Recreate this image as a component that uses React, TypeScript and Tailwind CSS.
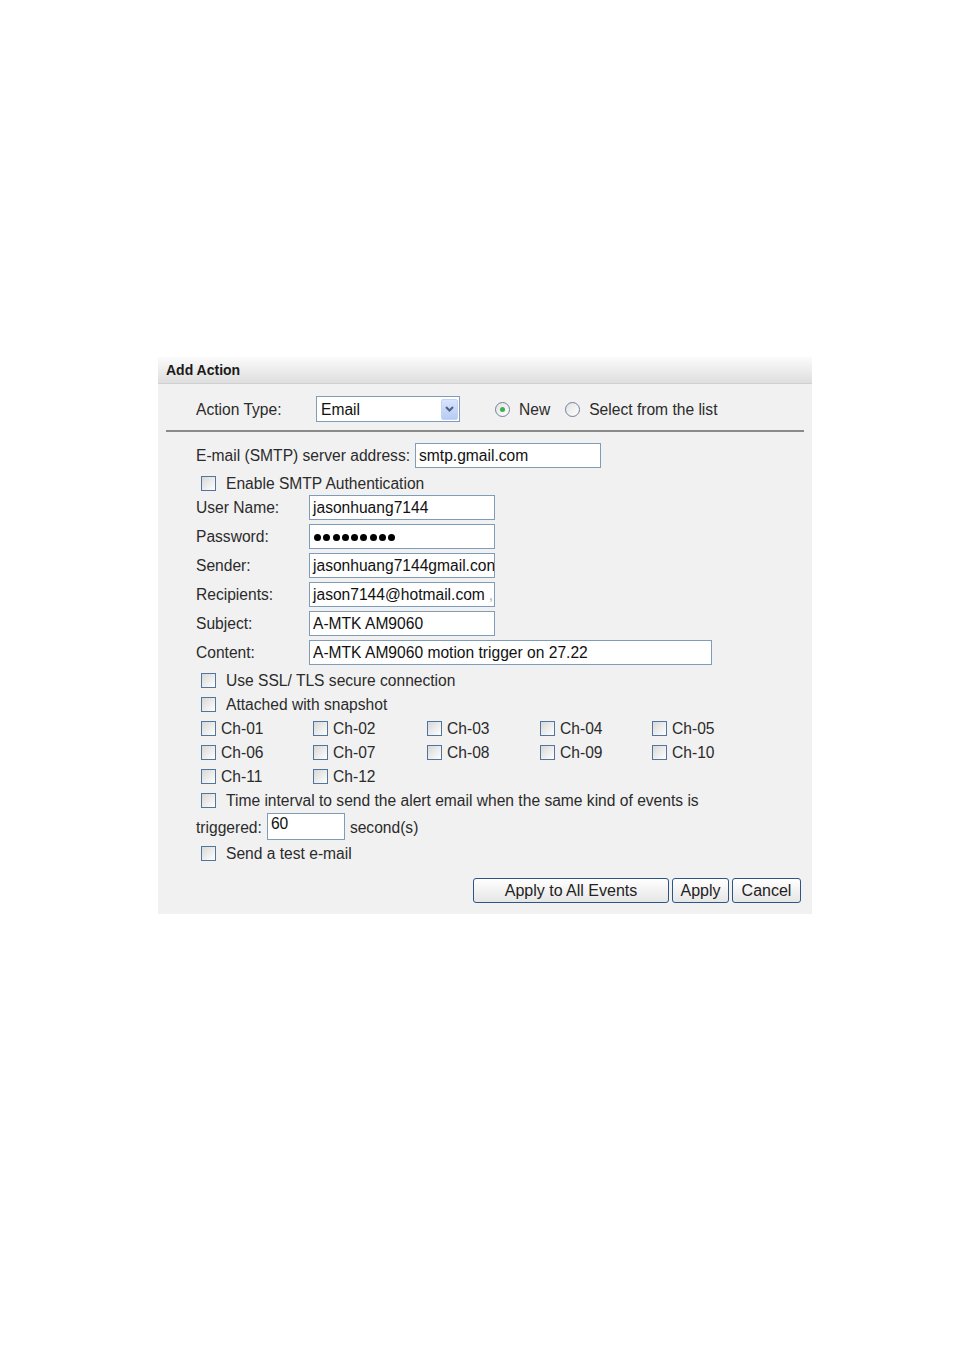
import React from "react";

const font = { fontFamily: '"Liberation Sans", Arial, sans-serif' };

function Check({ className = "" }: { className?: string }) {
  return (
    <span
      className={`block w-[15px] h-[15px] shrink-0 border border-[#52759b] bg-gradient-to-br from-[#d8d8d8] to-[#ffffff] ${className}`}
    />
  );
}

function Radio({ checked }: { checked?: boolean }) {
  return (
    <span className="flex items-center justify-center w-[15px] h-[15px] shrink-0 rounded-full border border-[#6f829a] bg-gradient-to-br from-[#e2e2e2] to-[#ffffff]">
      {checked && <span className="block w-[5px] h-[5px] rounded-full bg-[#3bb34a]" />}
    </span>
  );
}

function Input({ w, children, h = "h-[25px]" }: { w: string; children?: React.ReactNode; h?: string }) {
  return (
    <div className={`${w} ${h} border border-[#7f9db9] bg-white flex items-center pl-[3px] pt-[1px] overflow-hidden whitespace-nowrap text-[15.6px] text-[#111]`}>
      {children}
    </div>
  );
}

function Btn({ w, children }: { w: string; children: React.ReactNode }) {
  return (
    <div className={`${w} h-[25px] rounded-[3px] border border-[#2e5584] bg-gradient-to-b from-[#ffffff] to-[#e6e6e6] flex items-center justify-center text-[16px] text-[#222]`}>
      {children}
    </div>
  );
}

function FieldRow({ label, children, mt = "mt-[4px]" }: { label: string; children: React.ReactNode; mt?: string }) {
  return (
    <div className={`flex items-center h-[25px] ${mt}`}>
      <div className="w-[113px] shrink-0 pt-[1px]">{label}</div>
      {children}
    </div>
  );
}

function CheckRow({ label }: { label: string }) {
  return (
    <div className="flex items-center h-[24px] pl-[5px]">
      <Check />
      <span className="ml-[10px] pt-[1px]">{label}</span>
    </div>
  );
}

export default function App() {
  const chs = ["Ch-01", "Ch-02", "Ch-03", "Ch-04", "Ch-05", "Ch-06", "Ch-07", "Ch-08", "Ch-09", "Ch-10", "Ch-11", "Ch-12"];
  return (
    <div className="w-[955px] h-[1350px] bg-white pt-[357px] pl-[158px]" style={font}>
      <div className="w-[654px] bg-[#f1f1f1] text-[15.6px] text-[#2b2b2b]">
        <div className="h-[27px] bg-gradient-to-b from-[#fbfbfb] to-[#dedede] flex items-center pl-[8px] border-b border-[#d0d0d0]">
          <span className="text-[14px] font-bold text-[#1a1a1a]">Add Action</span>
        </div>
        <div className="pt-[12px] pb-[11px]">
          <div className="flex items-center h-[26px] pl-[38px]">
            <div className="w-[120px] pt-[2px]">Action Type:</div>
            <div className="w-[144px] h-[26px] border border-[#7f9db9] bg-white flex items-center justify-between pl-[4px] pr-[1px]">
              <span className="text-[#111] pt-[1px]">Email</span>
              <span className="w-[17px] h-[21px] rounded-[2px] bg-gradient-to-b from-[#d8e4fc] to-[#b7cbf5] border border-[#c3d3f5] flex items-center justify-center">
                <svg width="9" height="6" viewBox="0 0 9 6">
                  <path d="M1 1 L4.5 4.5 L8 1" stroke="#4d6185" strokeWidth="2" fill="none" />
                </svg>
              </span>
            </div>
            <div className="ml-[35px] flex items-center pt-[2px]">
              <Radio checked />
              <span className="ml-[9px]">New</span>
              <span className="ml-[15px] flex items-center"><Radio /></span>
              <span className="ml-[9px]">Select from the list</span>
            </div>
          </div>
          <div className="mx-[8px] mt-[8px] h-[2px] bg-[#8a8a8a]" />
          <div className="pl-[38px]">
            <div className="flex items-center h-[26px] mt-[10px]">
              <span className="pt-[2px]">E-mail (SMTP) server address:</span>
              <div className="ml-[5px]">
                <Input w="w-[186px]">smtp.gmail.com</Input>
              </div>
            </div>
            <div className="mt-[3px]">
              <CheckRow label="Enable SMTP Authentication" />
            </div>
            <FieldRow label="User Name:" mt="mt-0">
              <Input w="w-[186px]">jasonhuang7144</Input>
            </FieldRow>
            <FieldRow label="Password:">
              <Input w="w-[186px]">
                <div className="flex gap-[2.3px] ml-[1px]">
                  {Array.from({ length: 9 }).map((_, i) => (
                    <span key={i} className="block w-[7px] h-[7px] rounded-full bg-black" />
                  ))}
                </div>
              </Input>
            </FieldRow>
            <FieldRow label="Sender:">
              <Input w="w-[186px]">jasonhuang7144gmail.con</Input>
            </FieldRow>
            <FieldRow label="Recipients:">
              <Input w="w-[186px]">
                jason7144@hotmail.com<span className="text-[#b0b0b0] ml-[4px]">,</span>
              </Input>
            </FieldRow>
            <FieldRow label="Subject:">
              <Input w="w-[186px]">A-MTK AM9060</Input>
            </FieldRow>
            <FieldRow label="Content:">
              <Input w="w-[403px]">A-MTK AM9060 motion trigger on 27.22</Input>
            </FieldRow>
            <div className="mt-[3px]">
              <CheckRow label="Use SSL/ TLS secure connection" />
              <CheckRow label="Attached with snapshot" />
            </div>
            <div className="grid grid-cols-[112px_114px_113px_112px_80px] pl-[5px]">
              {chs.map((c) => (
                <div key={c} className="flex items-center h-[24px]">
                  <Check />
                  <span className="ml-[5px] pt-[1px]">{c}</span>
                </div>
              ))}
            </div>
            <CheckRow label="Time interval to send the alert email when the same kind of events is" />
            <div className="flex items-center h-[28px]">
              <span className="pt-[3px]">triggered:</span>
              <div className="ml-[5px]">
                <Input w="w-[78px]" h="h-[27px]">
                  <span className="-mt-[5px]">60</span>
                </Input>
              </div>
              <span className="ml-[5px] pt-[3px]">second(s)</span>
            </div>
            <div className="mt-[1px]">
              <CheckRow label="Send a test e-mail" />
            </div>
          </div>
          <div className="flex justify-end gap-[3px] pr-[11px] mt-[13px]">
            <Btn w="w-[196px]">Apply to All Events</Btn>
            <Btn w="w-[57px]">Apply</Btn>
            <Btn w="w-[69px]">Cancel</Btn>
          </div>
        </div>
      </div>
    </div>
  );
}
